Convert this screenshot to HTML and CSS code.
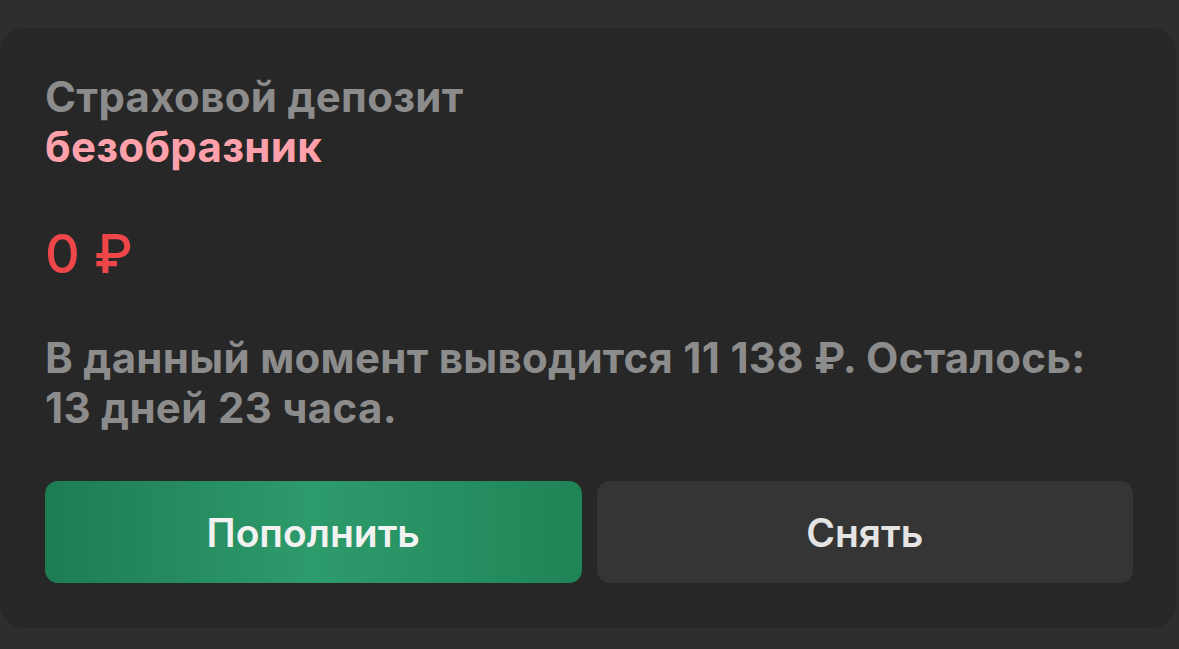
FILE: index.html
```html
<!DOCTYPE html>
<html lang="ru">
<head>
  <meta charset="UTF-8" />
  <meta name="viewport" content="width=device-width, initial-scale=1" />
  <title>Страховой депозит</title>
  <link rel="stylesheet" href="styles.css">
</head>
<body>

  <section class="deposit">
    <div class="deposit-head">
      <div class="deposit-title">Страховой депозит</div>
      <div class="deposit-status">безобразник</div>
    </div>

    <div class="deposit-amount">0 ₽</div>

    <p class="deposit-note">В данный момент выводится 11 138 ₽. Осталось: 13 дней 23 часа.</p>

    <div class="deposit-actions">
      <button class="btn btn-green">Пополнить</button>
      <button class="btn btn-dark">Снять</button>
    </div>
  </section>

</body>
</html>
```

FILE: styles.css
```css
:root {
  --page-bg: #2e2e2e;
  --card-bg: #272727;
  --muted: #8c8c8c;
  --pink: #ffa1ab;
  --red: #ee4649;
  --btn-dark: #353535;
  --btn-text: #f2f2f2;
}

body {
  margin: 0;
  background: var(--page-bg);
  font-family: Inter, 'Noto Sans', sans-serif;
  overflow: hidden;
}

.deposit {
  box-sizing: border-box;
  margin-top: 28px;
  width: 1176px;
  height: 600px;
  background: var(--card-bg);
  border-radius: 24px;
  padding: 44px 43px 0 45px;
}

.deposit-title,
.deposit-status {
  font-size: 42px;
  font-weight: 700;
  line-height: 50px;
  letter-spacing: 0.3px;
}

.deposit-title {
  color: var(--muted);
}

.deposit-status {
  color: var(--pink);
}

.deposit-amount {
  margin-top: 50px;
  font-size: 54px;
  font-weight: 500;
  line-height: 64px;
  color: var(--red);
}

.deposit-note {
  margin: 47px 0 0;
  font-size: 42px;
  font-weight: 700;
  line-height: 50px;
  letter-spacing: 0.3px;
  color: var(--muted);
  max-width: 1060px;
}

.deposit-actions {
  display: grid;
  grid-template-columns: 1fr 1fr;
  gap: 15px;
  margin-top: 48px;
}

.btn {
  height: 102px;
  border: none;
  border-radius: 13px;
  font-family: inherit;
  font-size: 39px;
  font-weight: 600;
  color: var(--btn-text);
  cursor: pointer;
}

.btn-green {
  background: linear-gradient(90deg, #1d7c53 0%, #2e9b6c 50%, #1f8456 100%);
}

.btn-dark {
  background: var(--btn-dark);
  color: #e4e4e4;
}
```
